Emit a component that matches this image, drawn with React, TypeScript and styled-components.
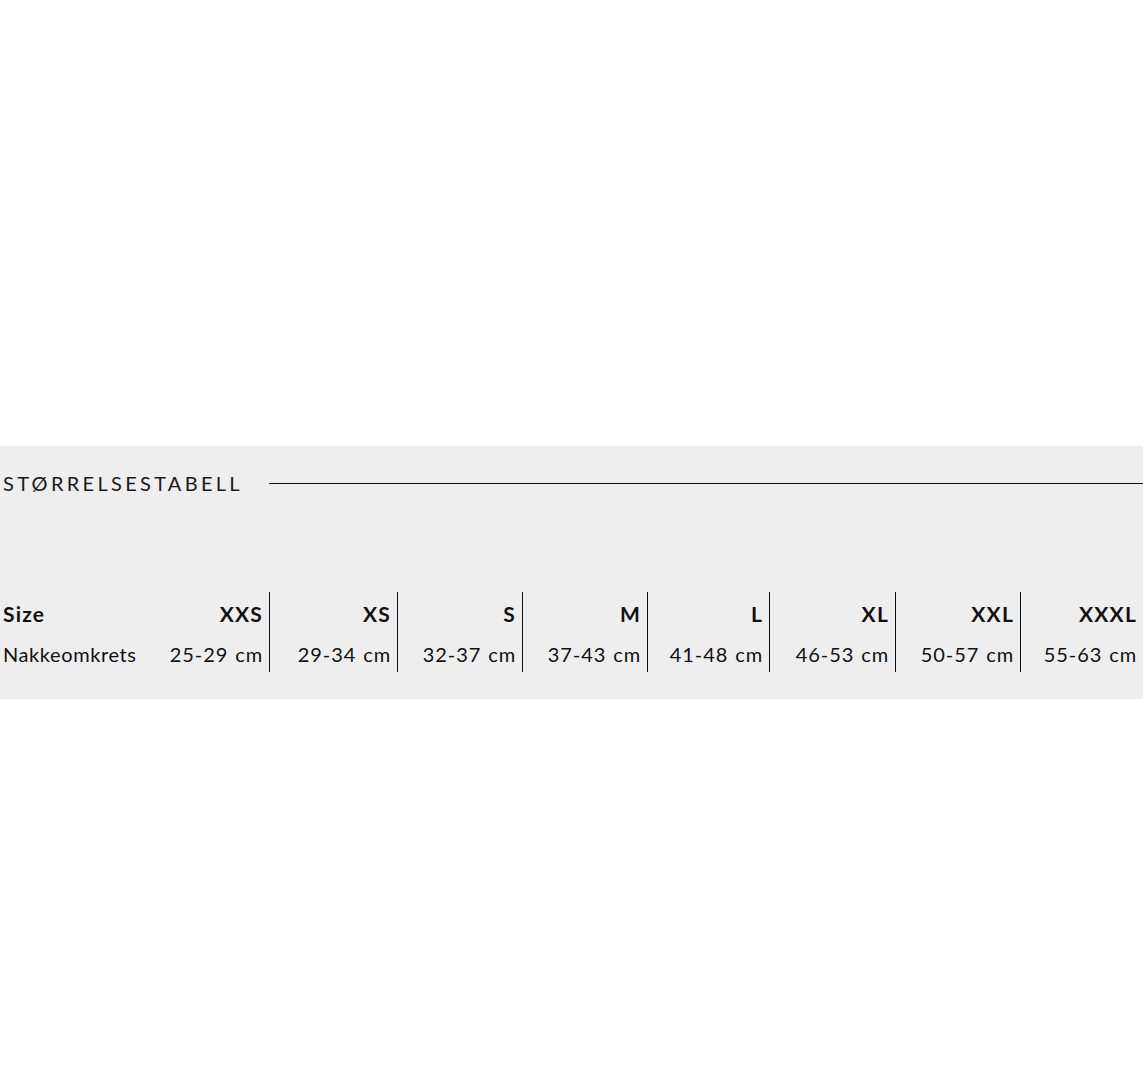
import React from "react";
import styled, { createGlobalStyle } from "styled-components";

const Global = createGlobalStyle`
  html, body { margin: 0; padding: 0; background: #ffffff; }
  body { font-family: Lato, "Noto Sans", sans-serif; color: #111; }
`;

const Page = styled.div`
  padding-top: 446px;
  height: 1079px;
  box-sizing: border-box;
`;

const Band = styled.section`
  background: #eeeeee;
  height: 253px;
  box-sizing: border-box;
  padding-top: 24px;
`;

const HeadingRow = styled.div`
  display: flex;
  align-items: center;
  height: 26px;
`;

const Heading = styled.h2`
  margin: 0 0 0 3px;
  font-family: Lato, sans-serif;
  font-weight: 400;
  font-size: 20px;
  letter-spacing: 3.3px;
  line-height: 26px;
  color: #1a1a1a;
  white-space: nowrap;
`;

const Rule = styled.div`
  flex: 1;
  height: 1px;
  background: #111;
  margin-left: 26px;
`;

const Table = styled.div`
  margin-top: 96px;
  display: grid;
  grid-template-columns: 150px 120px 128px 125px 125px 122px 126px 125px 122px;
  grid-auto-rows: 40px;
`;

const Cell = styled.div<{ $bold?: boolean; $label?: boolean; $border?: boolean }>`
  display: flex;
  align-items: center;
  justify-content: ${(p) => (p.$label ? "flex-start" : "flex-end")};
  padding: ${(p) => (p.$label ? "3px 0 0 3px" : "3px 6px 0 0")};
  box-sizing: border-box;
  font-size: ${(p) => (p.$bold ? "21px" : "20px")};
  font-weight: ${(p) => (p.$bold ? 700 : 400)};
  letter-spacing: ${(p) => (p.$bold ? "1.2px" : p.$label ? "0.6px" : "0.9px")};
  word-spacing: 1px;
  white-space: nowrap;
  color: #111;
  border-right: ${(p) => (p.$border ? "1px solid #111" : "none")};
`;

const sizes = ["XXS", "XS", "S", "M", "L", "XL", "XXL", "XXXL"];
const ranges = ["25-29 cm", "29-34 cm", "32-37 cm", "37-43 cm", "41-48 cm", "46-53 cm", "50-57 cm", "55-63 cm"];

export default function App() {
  return (
    <>
      <Global />
      <Page>
        <Band>
          <HeadingRow>
            <Heading>STØRRELSESTABELL</Heading>
            <Rule />
          </HeadingRow>
          <Table>
            <Cell $label $bold>Size</Cell>
            {sizes.map((s, i) => (
              <Cell key={s} $bold $border={i < sizes.length - 1}>{s}</Cell>
            ))}
            <Cell $label>Nakkeomkrets</Cell>
            {ranges.map((r, i) => (
              <Cell key={r} $border={i < ranges.length - 1}>{r}</Cell>
            ))}
          </Table>
        </Band>
      </Page>
    </>
  );
}
